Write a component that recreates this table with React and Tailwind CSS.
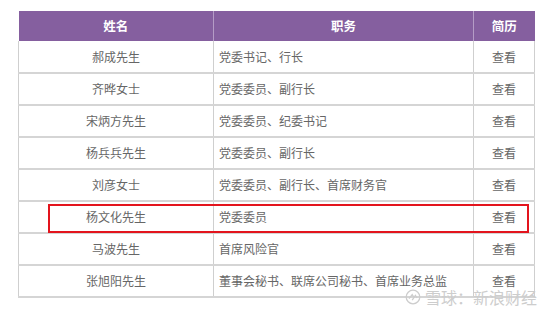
const rows = [
  { name: "郝成先生", duty: "党委书记、行长" },
  { name: "齐晔女士", duty: "党委委员、副行长" },
  { name: "宋炳方先生", duty: "党委委员、纪委书记" },
  { name: "杨兵兵先生", duty: "党委委员、副行长" },
  { name: "刘彦女士", duty: "党委委员、副行长、首席财务官" },
  { name: "杨文化先生", duty: "党委委员", marked: true },
  { name: "马波先生", duty: "首席风险官" },
  { name: "张旭阳先生", duty: "董事会秘书、联席公司秘书、首席业务总监" },
];

export default function App() {
  return (
    <div
      className="relative w-[550px] h-[314px] bg-white overflow-hidden pt-[11px] pl-[18px]"
      style={{ fontFamily: '"Microsoft YaHei", "Noto Sans CJK SC", sans-serif' }}
    >
      <table className="w-[516px] border-collapse table-fixed text-[12px] text-[#666]">
        <colgroup>
          <col className="w-[195px]" />
          <col className="w-[260px]" />
          <col className="w-[61px]" />
        </colgroup>
        <thead>
          <tr className="h-[30px] bg-[#855f9f] text-white font-bold text-[12.5px]">
            <th className="border-r border-[#b59cc6] text-center font-bold">姓名</th>
            <th className="border-r border-[#b59cc6] text-center font-bold">职务</th>
            <th className="text-center font-bold">简历</th>
          </tr>
        </thead>
        <tbody>
          {rows.map((r) => (
            <tr key={r.name} className="h-[32px] border-b-2 border-[#d5d5d5]">
              <td className="relative border-l border-r border-[#cfcfcf] text-center">
                {r.name}
                {r.marked && (
                  <div className="absolute left-[29px] top-[2px] w-[481px] h-[29px] border-2 border-[#e3141d] pointer-events-none z-10" />
                )}
              </td>
              <td className="border-r border-[#cfcfcf] pl-[5px] text-left">{r.duty}</td>
              <td className="border-r border-[#cfcfcf] text-center">查看</td>
            </tr>
          ))}
        </tbody>
      </table>

      {/* watermark */}
      <div className="absolute right-[13px] top-[289px] flex items-center gap-[4px] text-[#cdcdcd] text-[16px] leading-none">
        <svg width="16" height="16" viewBox="0 0 20 20" fill="none" stroke="#cdcdcd" strokeWidth="1.6">
          <circle cx="10" cy="10" r="8.5" />
          <path d="M5 12 L9 7 L11 10" />
          <path d="M9 14 L13 8 L15 11" />
        </svg>
        <span>雪球：新浪财经</span>
      </div>
    </div>
  );
}
